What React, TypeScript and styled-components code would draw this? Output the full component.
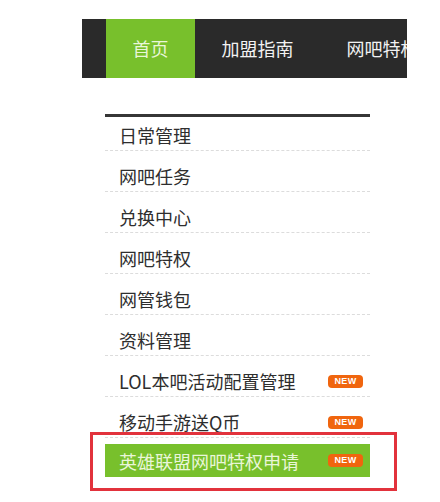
import React from "react";
import styled, { createGlobalStyle } from "styled-components";

const GlobalStyle = createGlobalStyle`
  html, body {
    margin: 0;
    padding: 0;
    background: #ffffff;
  }
  body {
    font-family: "Noto Sans CJK SC", "Noto Sans", "Liberation Sans", sans-serif;
  }
`;

const Page = styled.div`
  width: 440px;
  height: 502px;
  box-sizing: border-box;
  padding: 19px 0 0 82px;
  overflow: hidden;
`;

const NavBar = styled.nav`
  width: 325px;
  height: 59px;
  box-sizing: border-box;
  padding-left: 24px;
  background: #2a2a2a;
  display: flex;
  overflow: hidden;
`;

const Tab = styled.div<{ $active?: boolean }>`
  flex-shrink: 0;
  padding: 0 26.5px;
  line-height: 59px;
  font-size: 18px;
  white-space: nowrap;
  color: ${(p) => (p.$active ? "#e9f6d8" : "#f2f2f2")};
  background: ${(p) => (p.$active ? "#78c02c" : "transparent")};
`;

const Menu = styled.ul`
  list-style: none;
  margin: 36px 0 0 23px;
  padding: 0;
  width: 265px;
  border-top: 3px solid #363636;
`;

const Item = styled.li<{ $first?: boolean }>`
  box-sizing: border-box;
  height: ${(p) => (p.$first ? 34 : 41)}px;
  padding: ${(p) => (p.$first ? 8 : 15)}px 7px 0 14px;
  border-bottom: 1px dashed #dcdcdc;
  display: flex;
  align-items: flex-start;
  justify-content: space-between;
  font-size: 18px;
  line-height: 20px;
  color: #2e2e2e;
  white-space: nowrap;
`;

const ActiveRow = styled.li`
  position: relative;
  margin-top: 6px;
  height: 33px;
  padding: 0 7px 0 14px;
  background: #78c02c;
  display: flex;
  align-items: center;
  justify-content: space-between;
  font-size: 18px;
  color: #e9f6d8;
  white-space: nowrap;
`;

const Label = styled.span`
  display: block;
`;

const Badge = styled.span<{ $row?: boolean }>`
  width: 35px;
  height: 13px;
  margin-top: ${(p) => (p.$row ? "4px" : "0")};
  border-radius: 4px;
  background: #f0650e;
  color: #ffffff;
  font-family: "Liberation Sans", Arial, sans-serif;
  font-weight: bold;
  font-size: 9px;
  line-height: 13px;
  text-align: center;
  letter-spacing: 0.4px;
`;

const Callout = styled.span`
  position: absolute;
  left: -15px;
  top: -12px;
  right: -27px;
  bottom: -14px;
  border: 3px solid #e2323c;
  pointer-events: none;
`;

const items: { label: string; isNew?: boolean }[] = [
  { label: "日常管理" },
  { label: "网吧任务" },
  { label: "兑换中心" },
  { label: "网吧特权" },
  { label: "网管钱包" },
  { label: "资料管理" },
  { label: "LOL本吧活动配置管理", isNew: true },
  { label: "移动手游送Q币", isNew: true },
];

export default function App() {
  return (
    <>
      <GlobalStyle />
      <Page>
        <NavBar>
          <Tab $active>首页</Tab>
          <Tab>加盟指南</Tab>
          <Tab>网吧特权</Tab>
        </NavBar>
        <Menu>
          {items.map((it, i) => (
            <Item key={it.label} $first={i === 0}>
              <Label>{it.label}</Label>
              {it.isNew && <Badge $row>NEW</Badge>}
            </Item>
          ))}
          <ActiveRow>
            <Label>英雄联盟网吧特权申请</Label>
            <Badge>NEW</Badge>
            <Callout />
          </ActiveRow>
        </Menu>
      </Page>
    </>
  );
}
